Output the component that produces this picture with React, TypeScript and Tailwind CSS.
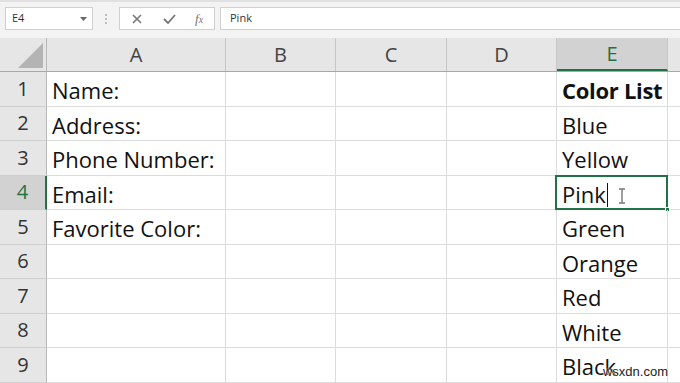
import React from "react";

const cols = [
  { name: "A", w: "w-[179px]" },
  { name: "B", w: "w-[110px]" },
  { name: "C", w: "w-[111px]" },
  { name: "D", w: "w-[110px]" },
  { name: "E", w: "w-[111px]" },
];

const colA = ["Name:", "Address:", "Phone Number:", "Email:", "Favorite Color:", "", "", "", ""];
const colE = ["Color List", "Blue", "Yellow", "Pink", "Green", "Orange", "Red", "White", "Black"];

export default function App() {
  return (
    <div
      className="relative w-[680px] h-[383px] overflow-hidden bg-white text-[#111]"
      style={{ fontFamily: '"Open Sans", "Noto Sans", sans-serif' }}
    >
      {/* Formula bar */}
      <div className="h-[38px] bg-[#f3f3f3] border-t-[2px] border-[#e0e0e0] flex items-start pt-[5px]">
        <div className="ml-[5px] w-[88px] h-[23px] bg-white border border-[#d0d0d0] flex items-center pl-[6px] pr-[5px] justify-between">
          <span className="text-[11px] text-[#333]">E4</span>
          <svg width="7" height="4" viewBox="0 0 7 4"><path d="M0 0h7L3.5 4z" fill="#666" /></svg>
        </div>
        <div className="ml-[12px] h-[23px] flex flex-col justify-center gap-[2px]">
          <div className="w-[2px] h-[2px] bg-[#bcbcbc]" />
          <div className="w-[2px] h-[2px] bg-[#bcbcbc]" />
          <div className="w-[2px] h-[2px] bg-[#bcbcbc]" />
        </div>
        <div className="ml-[12px] w-[96px] h-[23px] bg-white border border-[#d0d0d0] flex items-center">
          <svg className="ml-[12px]" width="10" height="10" viewBox="0 0 10 10">
            <path d="M1 1L9 9M9 1L1 9" stroke="#777" strokeWidth="1.6" />
          </svg>
          <svg className="ml-[21px]" width="13" height="10" viewBox="0 0 13 10">
            <path d="M1 5L5 9L12 1" stroke="#777" strokeWidth="1.8" fill="none" />
          </svg>
          <span
            className="ml-[19px] text-[13px] italic text-[#777] leading-none"
            style={{ fontFamily: '"Liberation Serif", serif' }}
          >
            f<span className="text-[10px]">x</span>
          </span>
        </div>
        <div className="ml-[5px] flex-1 h-[23px] bg-white border border-[#d0d0d0] border-r-0 flex items-center pl-[9px]">
          <span className="text-[11px] text-[#333]">Pink</span>
        </div>
      </div>

      {/* Column header row */}
      <div className="flex h-[34px] bg-[#e6e6e6] border-b border-[#a8a8a8]">
        <div className="w-[47px] h-full border-r border-[#b8b8b8] relative flex items-end justify-end pr-[3px] pb-[3px]">
          <svg width="25" height="25" viewBox="0 0 25 25"><path d="M25 0V25H0z" fill="#b4b4b4" /></svg>
        </div>
        {cols.map((c) => {
          const sel = c.name === "E";
          return (
            <div
              key={c.name}
              className={`${c.w} h-full border-r border-[#c6c6c6] flex items-center justify-center text-[20px] ${
                sel ? "bg-[#d2d2d2] text-[#217346] border-b-[2px] border-b-[#217346]" : "text-[#444]"
              }`}
            >
              {c.name}
            </div>
          );
        })}
        <div className="flex-1 h-full" />
      </div>

      {/* Rows */}
      {colE.map((e, i) => {
        const sel = i === 3;
        return (
          <div key={i} className="flex h-[34.5px]">
            <div
              className={`w-[47px] h-full border-b border-[#cfcfcf] flex items-center justify-center text-[20px] ${
                sel
                  ? "bg-[#d2d2d2] text-[#217346] border-r-[2px] border-r-[#217346]"
                  : "bg-[#e6e6e6] text-[#333] border-r border-r-[#b8b8b8]"
              }`}
            >
              {i + 1}
            </div>
            <div className="w-[179px] h-full border-r border-b border-[#dcdcdc] pl-[5px] pt-[2px] text-[22px] leading-[33px] whitespace-nowrap">
              {colA[i]}
            </div>
            <div className="w-[110px] h-full border-r border-b border-[#dcdcdc]" />
            <div className="w-[111px] h-full border-r border-b border-[#dcdcdc]" />
            <div className="w-[110px] h-full border-r border-b border-[#dcdcdc]" />
            <div
              className={`relative w-[111px] h-full border-r border-b border-[#dcdcdc] pl-[5px] pt-[2px] text-[22px] leading-[33px] whitespace-nowrap ${
                i === 0 ? "font-bold tracking-[-0.3px]" : ""
              }`}
            >
              {sel ? (
                <>
                  <span>{e}</span>
                  <span className="inline-block w-[1.5px] h-[24px] bg-[#111] align-middle ml-[1px] -mt-[4px]" />
                  <div className="absolute -left-[2px] -top-[1px] -right-[1px] -bottom-[1px] border-2 border-[#217346]" />
                  <div className="absolute -right-[3px] -bottom-[3px] w-[5px] h-[5px] bg-[#217346] border border-white" />
                  <svg className="absolute left-[61px] top-[12px]" width="8" height="16" viewBox="0 0 8 16">
                    <path d="M1 1h6M4 1v14M1 15h6" stroke="#777" strokeWidth="1.4" fill="none" />
                  </svg>
                </>
              ) : (
                e
              )}
            </div>
            <div className="flex-1 h-full border-b border-[#dcdcdc]" />
          </div>
        );
      })}

      {/* Watermark */}
      <div
        className="absolute right-[12px] bottom-[5px] text-[13px] text-[#222] leading-none"
        style={{ fontFamily: '"Liberation Sans", sans-serif', textShadow: "0 0 2px #fff, 0 0 2px #fff" }}
      >
        wsxdn.com
      </div>
    </div>
  );
}
